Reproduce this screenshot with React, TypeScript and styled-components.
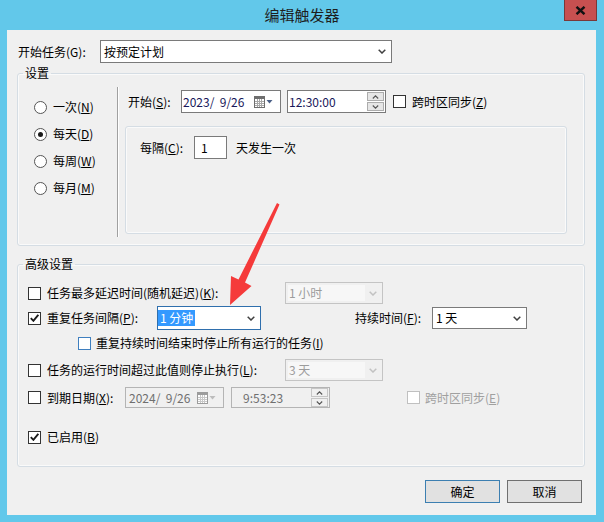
import React from 'react'
import styled, { createGlobalStyle } from 'styled-components'

const FONT = `"Noto Sans CJK SC", "Noto Sans", sans-serif`

type Tone = 'normal' | 'focus' | 'disabled'

const GlobalStyle = createGlobalStyle`
  html, body {
    margin: 0;
    padding: 0;
    background: #62c8ea;
  }
`

const Chevron = ({ dim }: { dim?: boolean }) => (
  <svg width="8" height="5" viewBox="0 0 8 5">
    <polyline
      points="0.7,0.7 4,4 7.3,0.7"
      fill="none"
      stroke={dim ? '#c2c2c2' : '#404040'}
      strokeWidth="1.5"
    />
  </svg>
)

const CalendarIcon = ({ dim }: { dim?: boolean }) => {
  const edge = dim ? '#9c9c9c' : '#6e6e6e'
  const grid = dim ? '#c8c8c8' : '#a8a8a8'
  return (
    <svg width="20" height="12" viewBox="0 0 20 12">
      <rect x="0.5" y="0.5" width="10" height="11" fill="#fff" stroke={edge} />
      <rect x="1" y="1" width="9" height="2" fill={edge} />
      <path d="M3.5 3v8M5.5 3v8M7.5 3v8M1 5.5h9M1 7.5h9M1 9.5h9" stroke={grid} strokeWidth="1" />
      <polygon points="12.5,4 18.5,4 15.5,7.5" fill={dim ? '#bcbcbc' : '#4a5f86'} />
    </svg>
  )
}

const Check = () => (
  <svg width="9" height="8" viewBox="0 0 9 8">
    <path d="M0.8 4.2 L3.4 6.8 L8.3 0.8" fill="none" stroke="#1a1a1a" strokeWidth="1.9" />
  </svg>
)

const SpinGlyph = ({ up }: { up?: boolean }) => (
  <svg width="7" height="4" viewBox="0 0 7 4">
    <polyline
      points={up ? '0.8,3.5 3.5,0.8 6.2,3.5' : '0.8,0.5 3.5,3.2 6.2,0.5'}
      fill="none"
      stroke="#555"
      strokeWidth="1.1"
    />
  </svg>
)

const Frame = styled.div`
  position: relative;
  width: 604px;
  height: 522px;
  box-sizing: border-box;
  background: #62c8ea;
  padding: 0 8px 7px 7px;
  display: flex;
  flex-direction: column;
  font-family: ${FONT};
  font-size: 12px;
  line-height: 16px;
  color: #000;
`

const TitleBar = styled.div`
  height: 30px;
  margin: 0 -8px 0 -7px;
  display: grid;
  grid-template-columns: 1fr auto 1fr;
`

const Title = styled.div`
  grid-column: 2;
  align-self: center;
  font-size: 15px;
  line-height: 20px;
  color: #1e1e1e;
`

const CloseButton = styled.div`
  grid-column: 3;
  justify-self: end;
  width: 33px;
  height: 21px;
  margin-right: 7px;
  box-sizing: border-box;
  background: #c75050;
  border: 1px solid #7a3838;
  border-top: none;
  display: flex;
  align-items: center;
  justify-content: center;
`

const Client = styled.div`
  flex: 1;
  background: #f0f0f0;
  padding: 10px 11px 0 10px;
  display: flex;
  flex-direction: column;
`

const Row = styled.div<{ $h: number; $mt?: number; $pl?: number }>`
  display: flex;
  align-items: center;
  height: ${(p) => p.$h}px;
  margin-top: ${(p) => p.$mt ?? 0}px;
  padding-left: ${(p) => p.$pl ?? 0}px;
  white-space: nowrap;
`

const Label = styled.span<{ $w?: number; $ml?: number; $dim?: boolean }>`
  flex: none;
  width: ${(p) => (p.$w ? `${p.$w}px` : 'auto')};
  margin-left: ${(p) => p.$ml ?? 0}px;
  color: ${(p) => (p.$dim ? '#a0a0a0' : '#000')};
`

const Combo = styled.div<{ $w: number; $h: number; $ml?: number; $tone?: Tone }>`
  flex: none;
  width: ${(p) => p.$w}px;
  height: ${(p) => p.$h}px;
  margin-left: ${(p) => p.$ml ?? 0}px;
  box-sizing: border-box;
  border: 1px solid
    ${(p) => (p.$tone === 'focus' ? '#2f6fad' : p.$tone === 'disabled' ? '#c4c4c4' : '#7a7a7a')};
  background: ${(p) => (p.$tone === 'disabled' ? '#f0f0f0' : '#fff')};
  color: ${(p) => (p.$tone === 'disabled' ? '#9c9c9c' : '#000')};
  display: flex;
  align-items: center;
  padding: 0 5px 0 ${(p) => (p.$tone === 'focus' ? 0 : 2)}px;
  gap: 4px;
`

const ComboField = styled.span<{ $tone?: Tone }>`
  flex: 1;
  align-self: stretch;
  display: flex;
  align-items: center;
  margin: 2px 0;
  padding-left: ${(p) => (p.$tone === 'focus' ? 0 : 1)}px;
  background: ${(p) => (p.$tone === 'disabled' ? '#f7f7f7' : 'transparent')};
`

const Selected = styled.span`
  background: #3399ff;
  color: #fff;
  padding: 0 2px;
`

const DateBox = styled.div<{ $w: number; $h: number; $ml?: number; $dim?: boolean }>`
  flex: none;
  width: ${(p) => p.$w}px;
  height: ${(p) => p.$h}px;
  margin-left: ${(p) => p.$ml ?? 0}px;
  box-sizing: border-box;
  border: 1px solid ${(p) => (p.$dim ? '#b4b4b4' : '#7a7a7a')};
  background: ${(p) => (p.$dim ? '#f0f0f0' : '#fff')};
  color: ${(p) => (p.$dim ? '#6f6f6f' : '#18185a')};
  display: flex;
  align-items: center;
  padding: 0 1px 0 ${(p) => (p.$dim ? 3 : 1)}px;
  white-space: pre;
`

const Push = styled.span<{ $mr?: number }>`
  margin-left: auto;
  margin-right: ${(p) => p.$mr ?? 0}px;
  display: flex;
`

const Spin = styled.div`
  margin-left: auto;
  display: flex;
  flex-direction: column;
  gap: 1px;
`

const SpinButton = styled.div<{ $dim?: boolean }>`
  width: 17px;
  height: 9px;
  box-sizing: border-box;
  border: 1px solid ${(p) => (p.$dim ? '#c6c6c6' : '#acacac')};
  background: ${(p) => (p.$dim ? '#f0f0f0' : '#e6e6e6')};
  display: flex;
  align-items: center;
  justify-content: center;
`

const Box = styled.span<{ $tone?: Tone; $ml?: number }>`
  flex: none;
  width: 13px;
  height: 13px;
  margin-left: ${(p) => p.$ml ?? 0}px;
  box-sizing: border-box;
  border: 1px solid
    ${(p) => (p.$tone === 'focus' ? '#3f7fbf' : p.$tone === 'disabled' ? '#c0c0c0' : '#333')};
  background: #fff;
  display: inline-flex;
  align-items: center;
  justify-content: center;
`

const Radio = styled.span<{ $on?: boolean }>`
  flex: none;
  width: 13px;
  height: 13px;
  border-radius: 50%;
  box-sizing: border-box;
  border: 1px solid #555;
  background: #fff;
  display: inline-flex;
  align-items: center;
  justify-content: center;
  &::after {
    content: '';
    width: 5px;
    height: 5px;
    border-radius: 50%;
    background: ${(p) => (p.$on ? '#1a1a1a' : 'transparent')};
  }
`

const Group = styled.fieldset<{ $mt?: number }>`
  margin: ${(p) => p.$mt ?? 0}px 0 0;
  padding: 0;
  min-width: 0;
  border: 1px solid #d5dde4;
  border-radius: 3px;
  box-shadow: inset 0 0 0 1px #fafafa;
`

const Legend = styled.legend`
  margin-left: 5px;
  padding: 0 2px;
  line-height: 16px;
  font-size: 12px;
`

const ScheduleBody = styled.div`
  display: flex;
  padding: 6px 0 8px;
`

const RadioColumn = styled.div`
  width: 99px;
  box-sizing: border-box;
  padding: 12px 0 0 16px;
  display: flex;
  flex-direction: column;
  gap: 11px;
`

const RadioRow = styled.label`
  display: flex;
  align-items: center;
  gap: 6px;
  height: 16px;
`

const Divider = styled.div`
  width: 1px;
  height: 150px;
  background: #a0a0a0;
  border-right: 1px solid #fff;
`

const SchedulePanel = styled.div`
  margin-left: 6px;
  padding-top: 3px;
  display: flex;
  flex-direction: column;
`

const RecurPanel = styled.div`
  margin-top: 13px;
  width: 442px;
  height: 108px;
  box-sizing: border-box;
  border: 1px solid #d5dde4;
  border-radius: 3px;
  box-shadow: inset 0 0 0 1px #fafafa;
  padding: 9px 0 0 14px;
`

const NumberBox = styled.div`
  flex: none;
  width: 33px;
  height: 23px;
  box-sizing: border-box;
  border: 1px solid #7a7a7a;
  background: #fff;
  padding-left: 6px;
  display: flex;
  align-items: center;
`

const AdvancedBody = styled.div`
  padding: 10px 0 20px 10px;
  display: flex;
  flex-direction: column;
`

const ButtonRow = styled.div`
  margin-top: 13px;
  padding-right: 3px;
  display: flex;
  justify-content: flex-end;
  gap: 7px;
`

const Button = styled.div<{ $primary?: boolean }>`
  width: 75px;
  height: 23px;
  box-sizing: border-box;
  border: 1px solid ${(p) => (p.$primary ? '#3c7fb1' : '#707070')};
  background: #e1e1e1;
  display: flex;
  align-items: center;
  justify-content: center;
`

const Pointer = styled.svg`
  position: absolute;
  left: 224px;
  top: 200px;
  pointer-events: none;
`

const Key = ({ k }: { k: string }) => (
  <>
    (<u>{k}</u>)
  </>
)

const TimeSpin = ({ dim }: { dim?: boolean }) => (
  <Spin>
    <SpinButton $dim={dim}>
      <SpinGlyph up />
    </SpinButton>
    <SpinButton $dim={dim}>
      <SpinGlyph />
    </SpinButton>
  </Spin>
)

const App = () => {
  return (
    <Frame>
      <GlobalStyle />
      <TitleBar>
        <Title>编辑触发器</Title>
        <CloseButton>
          <svg width="11" height="9" viewBox="0 0 11 9">
            <path d="M1.5 0.8 L9.5 8.2 M9.5 0.8 L1.5 8.2" stroke="#111" strokeWidth="2.4" />
          </svg>
        </CloseButton>
      </TitleBar>

      <Client>
        <Row $h={23} $pl={1}>
          <Label $w={82}>开始任务(G):</Label>
          <Combo $w={292} $h={23}>
            <ComboField>按预定计划</ComboField>
            <Chevron />
          </Combo>
        </Row>

        <Group $mt={2}>
          <Legend>设置</Legend>
          <ScheduleBody>
            <RadioColumn>
              <RadioRow>
                <Radio />
                <Label>
                  一次<Key k="N" />
                </Label>
              </RadioRow>
              <RadioRow>
                <Radio $on />
                <Label>
                  每天<Key k="D" />
                </Label>
              </RadioRow>
              <RadioRow>
                <Radio />
                <Label>
                  每周<Key k="W" />
                </Label>
              </RadioRow>
              <RadioRow>
                <Radio />
                <Label>
                  每月<Key k="M" />
                </Label>
              </RadioRow>
            </RadioColumn>
            <Divider />
            <SchedulePanel>
              <Row $h={23} $pl={3}>
                <Label $w={53}>
                  开始<Key k="S" />:
                </Label>
                <DateBox $w={100} $h={23}>
                  2023/  9/26
                  <Push $mr={5}>
                    <CalendarIcon />
                  </Push>
                </DateBox>
                <DateBox $w={99} $h={23} $ml={6}>
                  12:30:00
                  <TimeSpin />
                </DateBox>
                <Box $ml={7} />
                <Label $ml={6}>
                  跨时区同步<Key k="Z" />
                </Label>
              </Row>
              <RecurPanel>
                <Row $h={23}>
                  <Label $w={54}>
                    每隔<Key k="C" />:
                  </Label>
                  <NumberBox>1</NumberBox>
                  <Label $ml={9}>天发生一次</Label>
                </Row>
              </RecurPanel>
            </SchedulePanel>
          </ScheduleBody>
        </Group>

        <Group $mt={10}>
          <Legend>高级设置</Legend>
          <AdvancedBody>
            <Row $h={22}>
              <Box />
              <Label $w={238} $ml={6}>
                任务最多延迟时间(随机延迟)<Key k="K" />:
              </Label>
              <Combo $w={98} $h={22} $tone="disabled">
                <ComboField $tone="disabled">1 小时</ComboField>
                <Chevron dim />
              </Combo>
            </Row>
            <Row $h={24} $mt={2}>
              <Box>
                <Check />
              </Box>
              <Label $w={110} $ml={6}>
                重复任务间隔<Key k="P" />:
              </Label>
              <Combo $w={104} $h={24} $tone="focus">
                <ComboField $tone="focus">
                  <Selected>1 分钟</Selected>
                </ComboField>
                <Chevron />
              </Combo>
              <Label $w={77} $ml={94}>
                持续时间<Key k="F" />:
              </Label>
              <Combo $w={95} $h={22}>
                <ComboField>1 天</ComboField>
                <Chevron />
              </Combo>
            </Row>
            <Row $h={20} $mt={3} $pl={50}>
              <Box $tone="focus" />
              <Label $ml={5}>
                重复持续时间结束时停止所有运行的任务<Key k="I" />
              </Label>
            </Row>
            <Row $h={22} $mt={6}>
              <Box />
              <Label $w={238} $ml={6}>
                任务的运行时间超过此值则停止执行<Key k="L" />:
              </Label>
              <Combo $w={98} $h={22} $tone="disabled">
                <ComboField $tone="disabled">3 天</ComboField>
                <Chevron dim />
              </Combo>
            </Row>
            <Row $h={21} $mt={6}>
              <Box />
              <Label $w={78} $ml={6}>
                到期日期<Key k="X" />:
              </Label>
              <DateBox $w={99} $h={21} $dim>
                2024/  9/26
                <Push $mr={5}>
                  <CalendarIcon dim />
                </Push>
              </DateBox>
              <DateBox $w={99} $h={21} $ml={7} $dim>
                {'   9:53:23'}
                <TimeSpin dim />
              </DateBox>
              <Box $tone="disabled" $ml={77} />
              <Label $ml={5} $dim>
                跨时区同步<Key k="E" />
              </Label>
            </Row>
            <Row $h={18} $mt={20}>
              <Box>
                <Check />
              </Box>
              <Label $ml={6}>
                已启用<Key k="B" />
              </Label>
            </Row>
          </AdvancedBody>
        </Group>

        <ButtonRow>
          <Button $primary>确定</Button>
          <Button>取消</Button>
        </ButtonRow>
      </Client>

      <Pointer width="60" height="110" viewBox="0 0 60 110">
        <polygon
          points="53,3 55.5,4.5 21,82.5 27.5,86 6,105 7,76 14.5,79.5"
          fill="#f53a3a"
        />
      </Pointer>
    </Frame>
  )
}

export default App
